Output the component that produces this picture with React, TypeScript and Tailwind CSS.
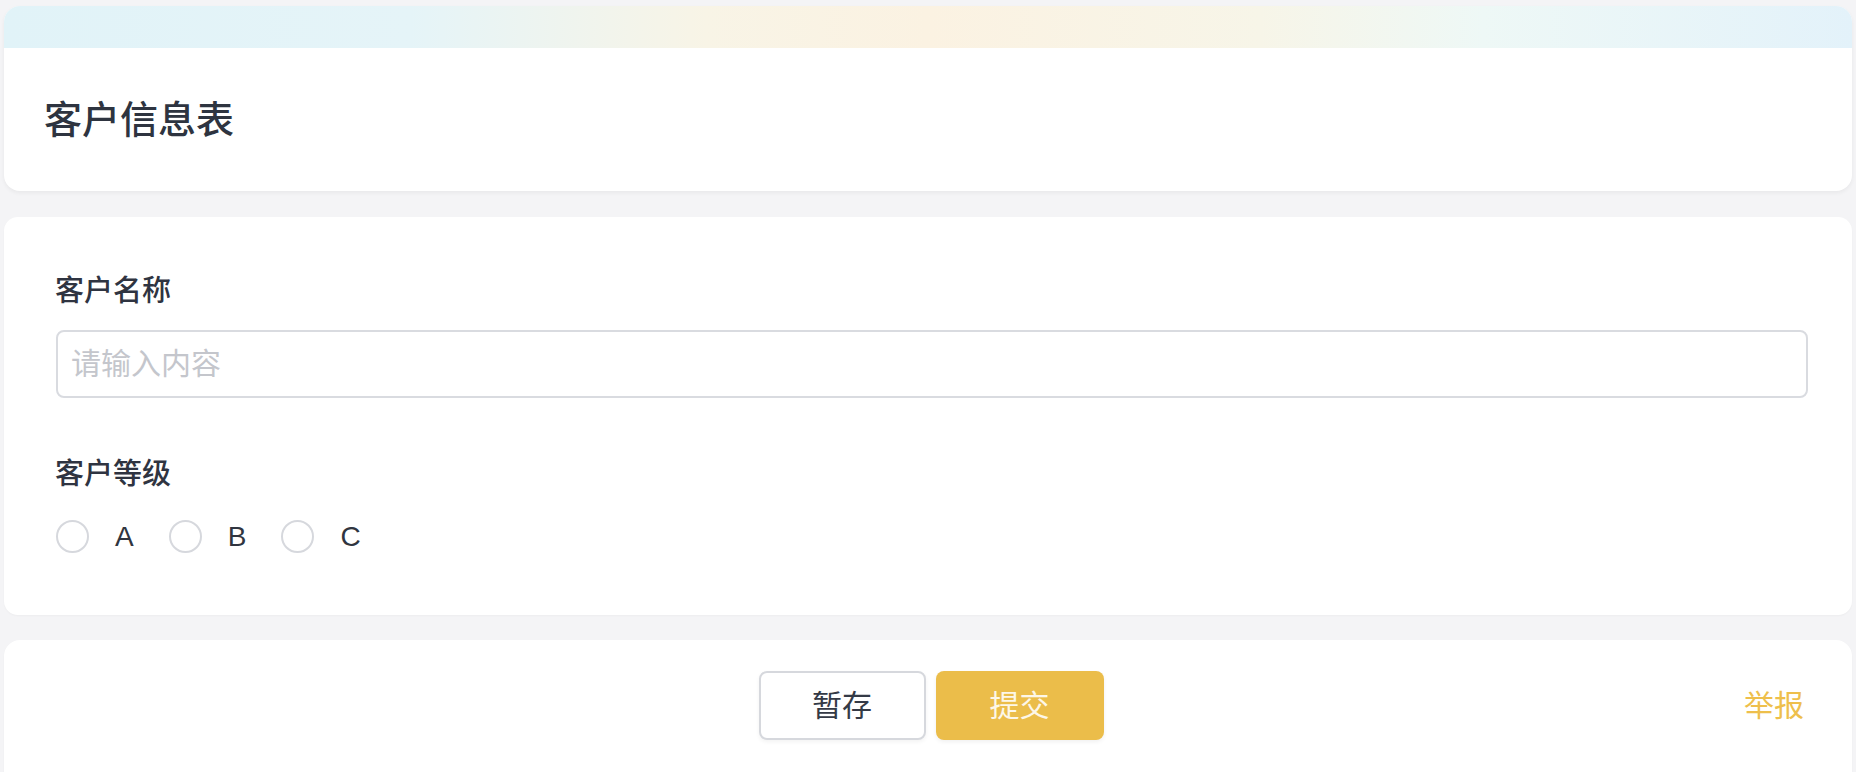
import React from "react";

const FONT = {
  fontFamily: '"Liberation Sans", "Noto Sans CJK SC", "Noto Sans", sans-serif',
};

function Radio({ label }: { label: string }) {
  return (
    <label className="flex items-center mr-[35px] cursor-pointer">
      <span className="w-[33px] h-[33px] rounded-full border-2 border-[#d6d8dd] bg-white shrink-0" />
      <span className="ml-[26px] text-[28px] leading-[33px] text-[#303540]">{label}</span>
    </label>
  );
}

export default function App() {
  return (
    <div className="min-h-screen bg-[#f4f4f6] pt-[6px] px-[4px] pb-[20px]" style={FONT}>
      {/* Header card */}
      <div className="h-[185px] bg-white rounded-[16px] overflow-hidden flex flex-col shadow-[0_2px_4px_rgba(0,0,0,0.05)]">
        <div className="h-[42px] shrink-0 bg-[linear-gradient(90deg,#e1f3f8_0%,#e5f4f8_22%,#f8f4e6_38%,#fbf2e2_50%,#f7f5e8_68%,#eef8f6_80%,#e3f2fa_100%)]" />
        <div className="flex-1 flex items-center pl-[40px]">
          <h1 className="text-[38px] leading-[48px] font-medium text-[#2e3440]">客户信息表</h1>
        </div>
      </div>

      {/* Form card */}
      <div className="mt-[26px] bg-white rounded-[14px] pt-[53px] pb-[62px] pl-[52px] pr-[44px] shadow-[0_1px_2px_rgba(0,0,0,0.03)]">
        <div className="-ml-[1px] text-[29px] leading-[42px] font-medium text-[#2f3441]">客户名称</div>
        <input
          className="mt-[18px] w-full h-[68px] border-2 border-[#d9dbe0] rounded-[8px] pl-[13px] pr-[16px] text-[30px] text-[#303540] placeholder:text-[#c4c6cc] outline-none"
          placeholder="请输入内容"
          style={FONT}
        />
        <div className="-ml-[1px] mt-[55px] text-[29px] leading-[42px] font-medium text-[#2f3441]">客户等级</div>
        <div className="mt-[25px] flex items-center">
          <Radio label="A" />
          <Radio label="B" />
          <Radio label="C" />
        </div>
      </div>

      {/* Footer card */}
      <div className="mt-[25px] h-[160px] bg-white rounded-[16px] pt-[31px] pl-[54px] pr-[48px] grid grid-cols-[1fr_auto_1fr] items-start shadow-[0_1px_2px_rgba(0,0,0,0.03)]">
        <div />
        <div className="flex gap-[10px]">
          <button className="w-[167px] h-[69px] rounded-[8px] border-2 border-[#d6d8dd] bg-white text-[30px] text-[#343a46] shadow-[0_2px_4px_rgba(0,0,0,0.05)]">
            暂存
          </button>
          <button className="w-[168px] h-[69px] rounded-[8px] bg-[#ebbd4a] text-[30px] text-[#fdf7e8] shadow-[0_2px_4px_rgba(0,0,0,0.06)]">
            提交
          </button>
        </div>
        <div className="justify-self-end h-[69px] flex items-center text-[30px] text-[#eebf4c]">举报</div>
      </div>
    </div>
  );
}
